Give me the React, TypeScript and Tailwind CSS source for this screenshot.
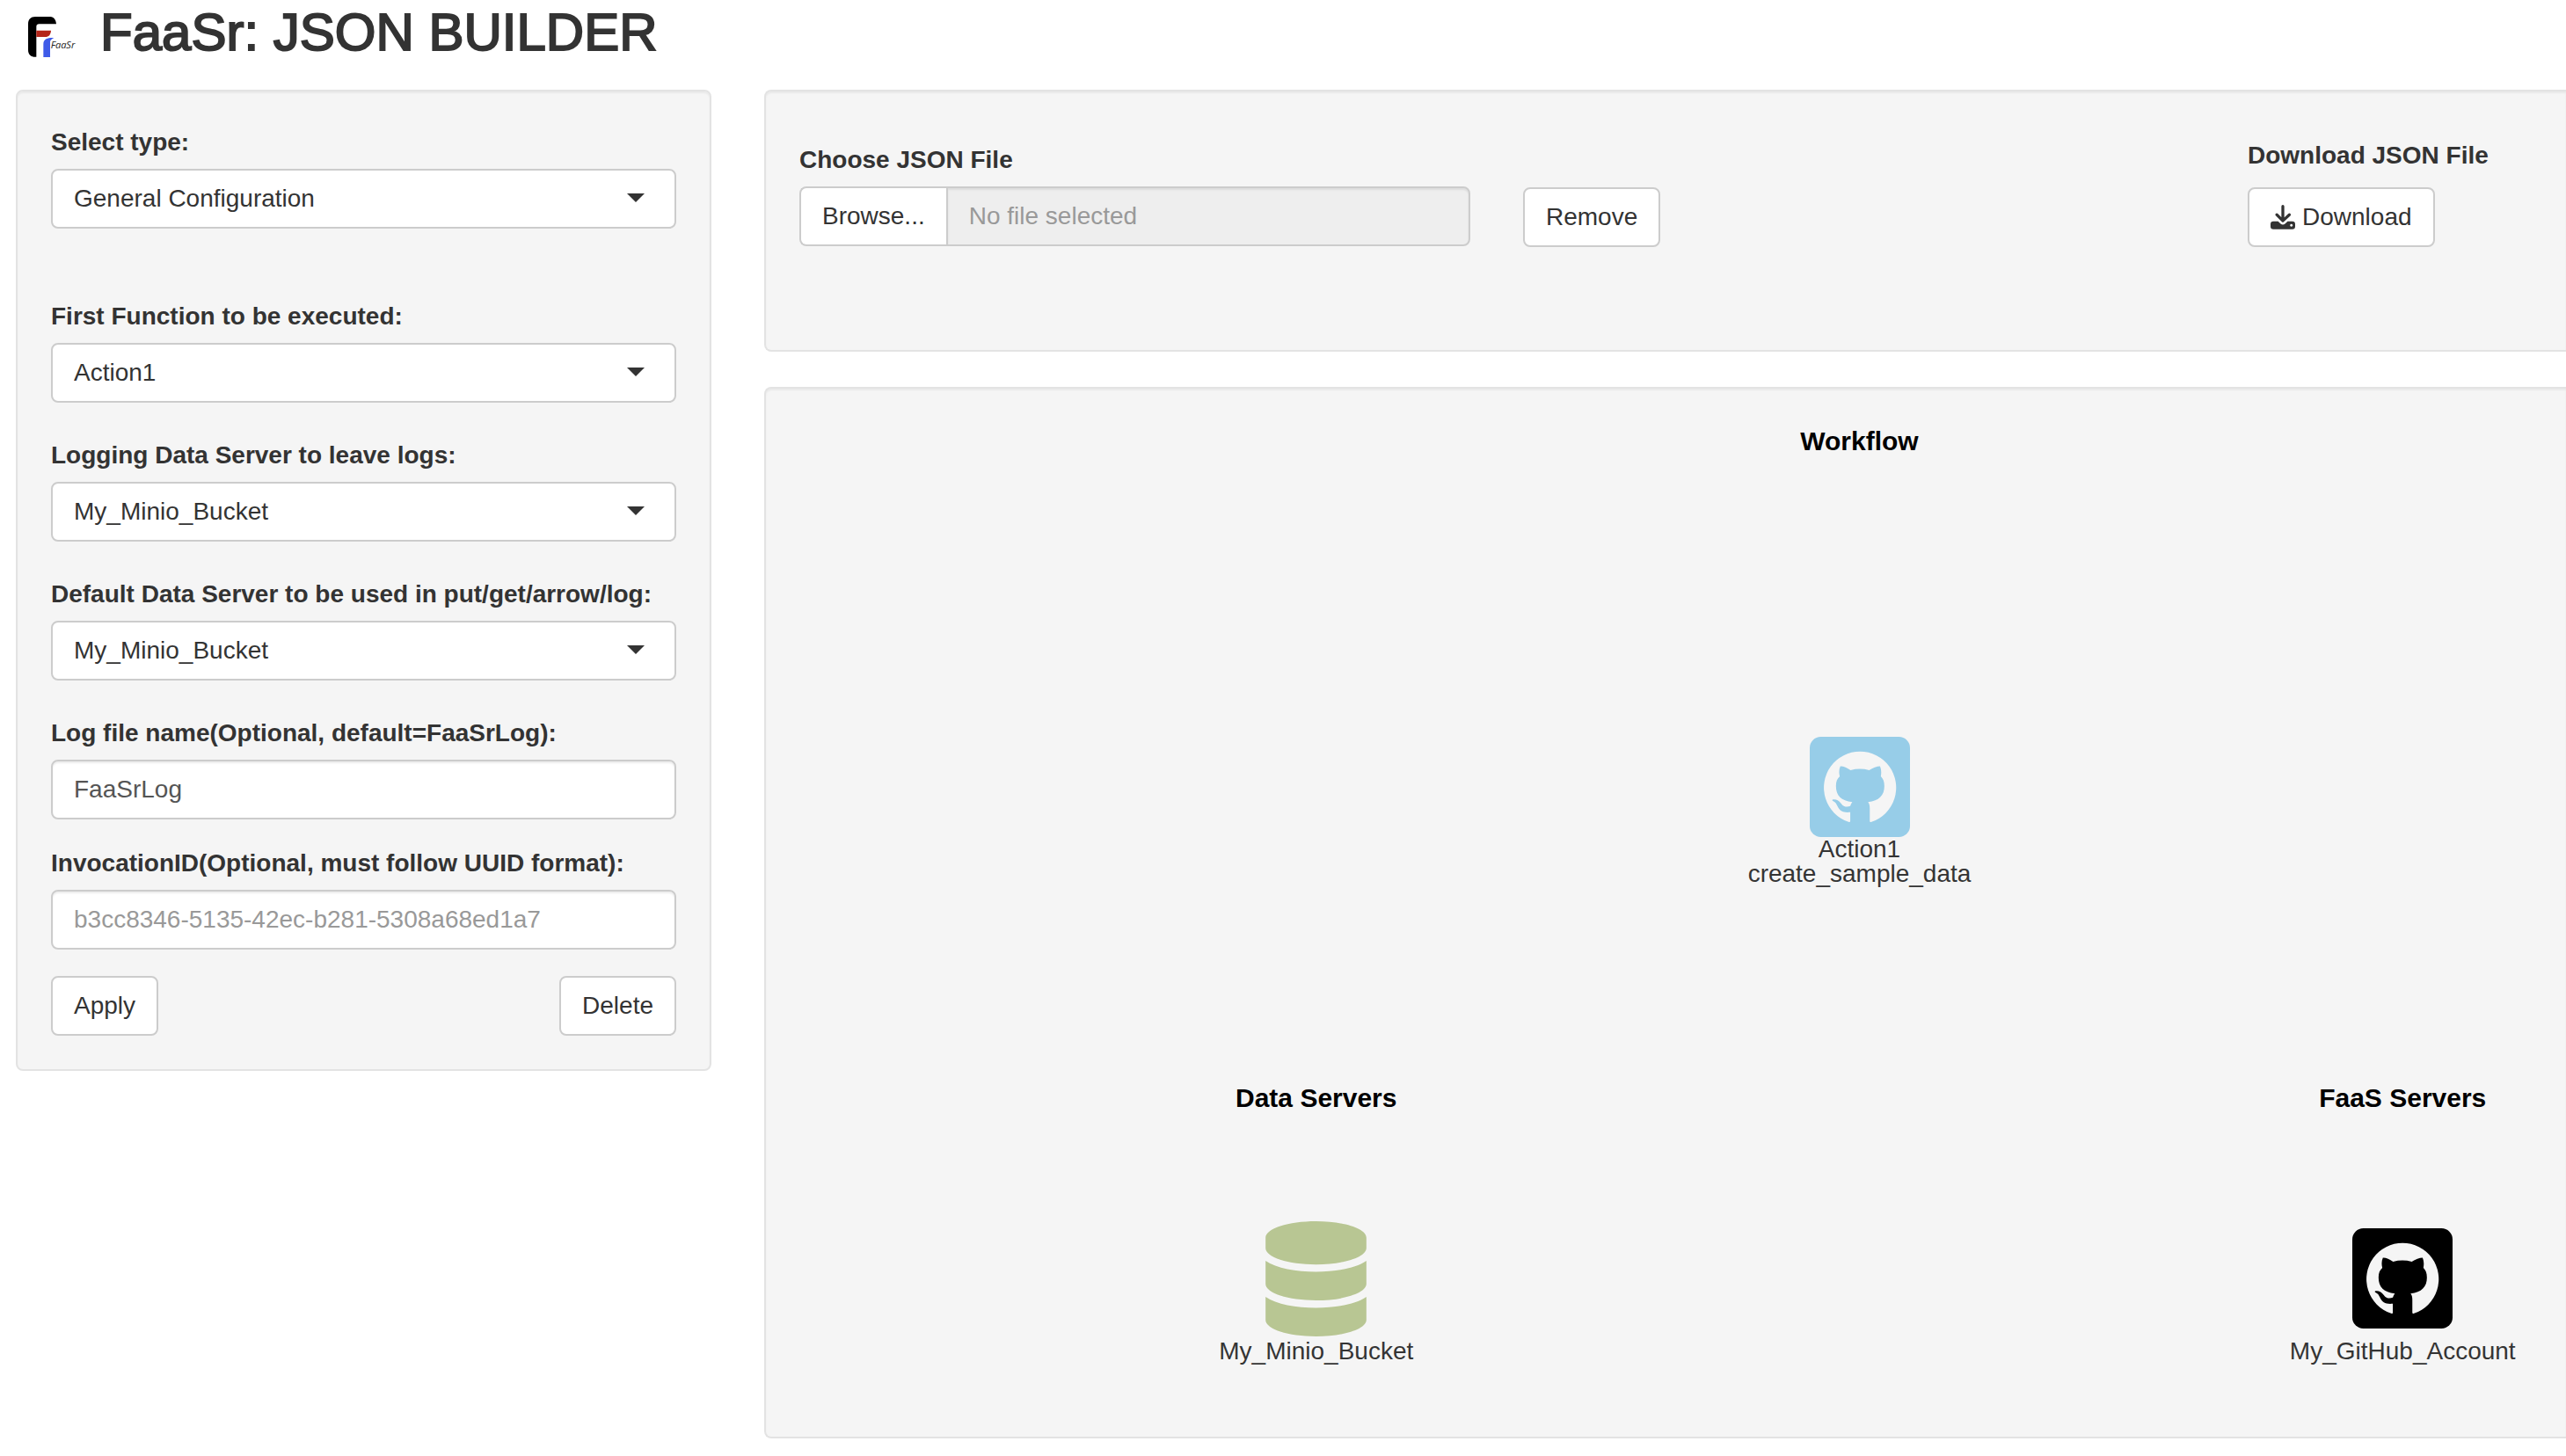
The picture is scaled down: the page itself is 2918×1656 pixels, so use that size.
import { useId } from "react";
import type { ReactNode } from "react";
import { FaDatabase } from "react-icons/fa";

function Logo() {
  return (
    <svg viewBox="30 21 168 180" className="h-[60px] w-14 shrink-0" role="img" aria-label="FaaSr logo">
      <path d="M36 82 C36 66 45 57 60 57 H112 C124 57 131 68 132 82 H74 C67 82 64 85 64 92 V194 H60 C46 194 36 186 36 170 Z" fill="#000" />
      <path d="M64 104 H114 C113 118 107 126 94 126 H64 Z" fill="#b5261a" />
      <path d="M124 129 C112 128 88 128 88 150 V195 H111 V142 C112 136 117 133 124 129 Z" fill="#3f5be8" />
      <text x="113" y="164" fontSize="33" fontStyle="italic" fontFamily="'Open Sans', 'Noto Sans', sans-serif" fill="#222">
        FaaSr
      </text>
    </svg>
  );
}

function DownloadIcon() {
  return (
    <svg viewBox="246 458 85 85" className="size-7 shrink-0" aria-hidden="true">
      <path d="M288.500 463 V512 M267.500 492 L288.500 513 L311 492" fill="none" stroke="#333" strokeWidth="10" strokeLinecap="round" strokeLinejoin="round" />
      <path
        fillRule="evenodd"
        d="M256 515 H272 L281 523 Q288.500 529 296 523 L305 515 H321 Q331 515 331 525 V532 Q331 542 321 542 H256 Q246 542 246 532 V525 Q246 515 256 515 Z M318 524 a4.500 4.500 0 1 0 0.010 0 Z"
        fill="#333"
      />
    </svg>
  );
}

function GithubSquare({ className }: { className: string }) {
  return (
    <svg viewBox="352 114 344 344" className={className} aria-hidden="true">
      <rect x="352" y="114" width="344" height="344" rx="38" fill="currentColor" />
      <path
        fill="#f5f5f5"
        d="M491 403 Q491 409 485 406 A124 124 0 1 1 564 406 Q558 409 558 403 V360 C558 350 557 344 552 338 C590 334 608 315 608 283 C608 268 604 258 596 250 C598 238 598 226 593 215 C583 215 568 220 556 229 C535 223 513 223 492 229 C480 220 466 214 457 215 C452 226 452 238 455 250 C446 258 442 268 442 283 C442 316 460 334 498 338 C494 343 493 347 491 352 C478 356 468 354 460 343 C451 332 442 328 434 329 C428 329 428 333 433 335 C440 338 443 343 447 352 C455 370 467 375 491 373 Z"
      />
    </svg>
  );
}

const label = "block text-[28px] leading-10 font-bold text-[#333]";
const control =
  "h-[68px] w-full rounded-lg border-2 border-[#ccc] bg-white px-6 text-[28px] leading-10";
const button =
  "flex h-[68px] items-center gap-2 rounded-lg border-2 border-[#ccc] bg-white px-6 text-[28px] leading-10 text-[#333]";
const well = "border-[#e3e3e3] bg-[#f5f5f5] shadow-[inset_0_2px_2px_rgba(0,0,0,0.05)]";

function SelectField({ text, options }: { text: string; options: string[] }) {
  const id = useId();
  return (
    <div>
      <label htmlFor={id} className={label}>
        {text}
      </label>
      <div className="relative mt-[10px]">
        <select id={id} className={`${control} block appearance-none text-[#333]`}>
          {options.map((o) => (
            <option key={o}>{o}</option>
          ))}
        </select>
        <svg viewBox="0 0 20 10" className="pointer-events-none absolute top-7 right-9 h-[10px] w-5" aria-hidden="true">
          <path d="M0 0H20L10 10Z" fill="#333" />
        </svg>
      </div>
    </div>
  );
}

function TextField({ text, value, placeholder }: { text: string; value?: string; placeholder?: string }) {
  const id = useId();
  return (
    <div>
      <label htmlFor={id} className={label}>
        {text}
      </label>
      <input
        id={id}
        type="text"
        defaultValue={value}
        placeholder={placeholder}
        className={`${control} mt-[10px] block text-[#555] shadow-[inset_0_2px_2px_rgba(0,0,0,0.075)] placeholder:text-[#999]`}
      />
    </div>
  );
}

function Heading({ children }: { children: ReactNode }) {
  return <h3 className="text-center text-[30px] leading-10 font-bold text-black">{children}</h3>;
}

function ServerNode({ title, name, children }: { title: string; name: string; children: ReactNode }) {
  return (
    <section className="flex flex-col items-center">
      <Heading>{title}</Heading>
      <div className="mt-[118px] flex h-[134px] items-center">{children}</div>
      <p className="mt-0.5 text-[28px] leading-7 text-[#343434]">{name}</p>
    </section>
  );
}

export default function App() {
  return (
    <div className="min-h-screen overflow-x-hidden bg-white font-['Liberation_Sans',Arial,sans-serif] text-[#333]">
      <header className="flex items-center gap-7 pt-1 pb-8 pl-[30px]">
        <Logo />
        <h1 className="text-[60px] leading-[66px] font-medium [-webkit-text-stroke:2px_#333]">FaaSr: JSON BUILDER</h1>
      </header>

      <div className="grid grid-cols-[791fr_2049fr] items-start gap-[60px] pl-[18px]">
        <form className={`${well} rounded-lg border-2 p-[38px]`} onSubmit={(e) => e.preventDefault()}>
          <SelectField text="Select type:" options={["General Configuration"]} />
          <div className="mt-20 flex flex-col gap-10">
            <SelectField text="First Function to be executed:" options={["Action1"]} />
            <SelectField text="Logging Data Server to leave logs:" options={["My_Minio_Bucket"]} />
            <SelectField text="Default Data Server to be used in put/get/arrow/log:" options={["My_Minio_Bucket"]} />
          </div>
          <div className="mt-10 flex flex-col gap-[30px]">
            <TextField text="Log file name(Optional, default=FaaSrLog):" value="FaaSrLog" />
            <TextField
              text="InvocationID(Optional, must follow UUID format):"
              placeholder="b3cc8346-5135-42ec-b281-5308a68ed1a7"
            />
            <div className="flex justify-between">
              <button type="button" className={button}>
                Apply
              </button>
              <button type="button" className={button}>
                Delete
              </button>
            </div>
          </div>
        </form>

        <main className="flex min-w-0 flex-col gap-10">
          <section
            className={`${well} grid grid-cols-[763fr_764fr_362fr] gap-[60px] rounded-l-lg border-y-2 border-l-2 pt-[53px] pb-[117px] pl-[38px]`}
          >
            <div className="pt-[5px]">
              <label htmlFor="json-file" className={label}>
                Choose JSON File
              </label>
              <div className="mt-[10px] flex">
                <button
                  type="button"
                  className="h-[68px] shrink-0 rounded-l-lg border-2 border-r-0 border-[#ccc] bg-white px-6 text-[28px] leading-10 text-[#333]"
                >
                  Browse...
                </button>
                <input
                  id="json-file"
                  type="text"
                  readOnly
                  placeholder="No file selected"
                  className="h-[68px] min-w-0 flex-1 rounded-r-lg border-2 border-[#ccc] bg-[#eee] px-6 text-[28px] leading-10 shadow-[inset_0_2px_2px_rgba(0,0,0,0.075)] placeholder:text-[#999]"
                />
              </div>
            </div>
            <div className="flex items-end">
              <button type="button" className={button}>
                Remove
              </button>
            </div>
            <div className="flex flex-col items-start gap-4">
              <p className={label}>Download JSON File</p>
              <button type="button" className={button}>
                <DownloadIcon />
                Download
              </button>
            </div>
          </section>

          <section className={`${well} overflow-hidden rounded-l-lg border-y-2 border-l-2`}>
            <div className="w-[calc(100%+440px)] px-2 pt-10 pb-[83px]">
              <Heading>Workflow</Heading>
              <div className="mt-[316px] flex flex-col items-center text-[28px] leading-7 text-[#343434]">
                <GithubSquare className="size-[114px] text-[#97cde8]" />
                <p>Action1</p>
                <p>create_sample_data</p>
              </div>
              <div className="mt-[221px] grid grid-cols-2">
                <ServerNode title="Data Servers" name="My_Minio_Bucket">
                  <FaDatabase className="h-[131px] w-[115px] text-[#b8c693]" aria-hidden="true" />
                </ServerNode>
                <ServerNode title="FaaS Servers" name="My_GitHub_Account">
                  <GithubSquare className="size-[114px] text-black" />
                </ServerNode>
              </div>
            </div>
          </section>
        </main>
      </div>
    </div>
  );
}
